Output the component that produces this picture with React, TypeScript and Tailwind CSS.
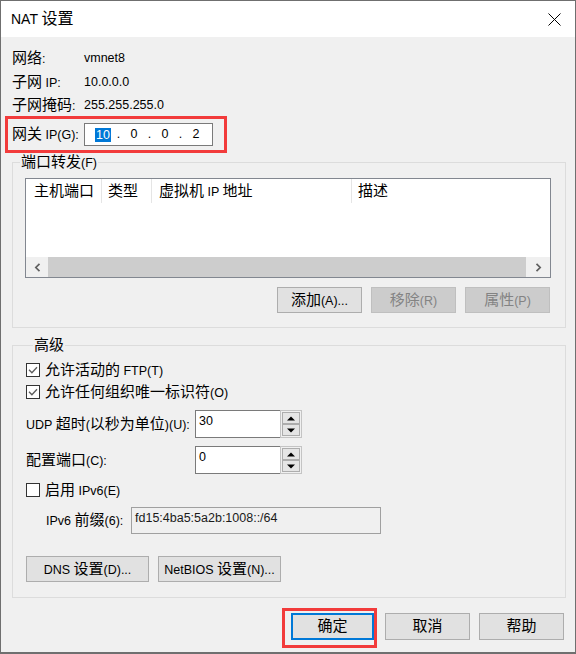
import React from 'react';

const CJK_RE = /([\u2E80-\u9FFF\uF900-\uFAFF\uFF00-\uFFEF]+)/;

// Latin runs stay small, CJK runs a bit larger, like the Windows dialog font mix
function Mix({ text, title = false }: { text: string; title?: boolean }) {
  const parts = text.split(CJK_RE);
  return (
    <span className="whitespace-pre">
      {parts.map((part, i) =>
        i % 2 === 1 ? (
          <span key={i} className={title ? 'text-[16px]' : 'text-[15px]'}>
            {part}
          </span>
        ) : (
          <React.Fragment key={i}>{part}</React.Fragment>
        )
      )}
    </span>
  );
}

function Btn({ label, className = '', disabled = false }: { label: string; className?: string; disabled?: boolean }) {
  return (
    <button
      type="button"
      className={`flex items-center justify-center border ${
        disabled ? 'bg-[#cccccc] border-[#bfbfbf] text-[#838383]' : 'bg-[#e1e1e1] border-[#adadad] text-black'
      } ${className}`}
    >
      <Mix text={label} />
    </button>
  );
}

function Check({ checked }: { checked: boolean }) {
  return (
    <span className="w-[14px] h-[14px] border border-[#333333] bg-white flex items-center justify-center">
      {checked && (
        <svg width="10" height="8" viewBox="0 0 10 8">
          <path d="M1 3.8 L3.9 6.7 L9 1.2" stroke="#5c5c5c" strokeWidth="1.3" fill="none" />
        </svg>
      )}
    </span>
  );
}

function SpinBox({ value }: { value: string }) {
  return (
    <div className="flex w-[107px] h-[28px]">
      <div className="flex-1 bg-white border-y border-l border-[#7a7a7a] pl-[3px] pt-[2px] leading-[16px]">{value}</div>
      <div className="w-[22px] border border-[#c4c4c4] bg-[#f0f0f0] p-[1px] flex flex-col">
        <div className="flex-1 border border-[#adadad] bg-[#e5e5e5] flex items-center justify-center">
          <svg width="8" height="5" viewBox="0 0 8 5">
            <path d="M0 4.5 L4 0.5 L8 4.5 Z" fill="#000" />
          </svg>
        </div>
        <div className="flex-1 border border-[#adadad] bg-[#e5e5e5] flex items-center justify-center">
          <svg width="8" height="5" viewBox="0 0 8 5">
            <path d="M0 0.5 L8 0.5 L4 4.5 Z" fill="#000" />
          </svg>
        </div>
      </div>
    </div>
  );
}

function GroupBox({ title, className = '', children }: { title: string; className?: string; children: React.ReactNode }) {
  return (
    <fieldset className={`ml-[7px] w-[554px] border border-[#dcdcdc] ${className}`}>
      <legend className="ml-[7px] px-[1px] h-[17px] leading-[17px] flex items-center">
        <Mix text={title} />
      </legend>
      {children}
    </fieldset>
  );
}

export default function App() {
  return (
    <div className="w-[576px] h-[654px] border border-b-2 border-[#6f6f6f] bg-[#f0f0f0] flex flex-col overflow-hidden font-['Liberation_Sans','Noto_Sans_CJK_SC',sans-serif] text-[12.5px] leading-[17px] text-black">
      {/* title bar */}
      <div className="h-[36px] shrink-0 bg-white flex items-center justify-between pl-[10px] pr-[14px]">
        <span className="text-[14px]">
          <Mix text="NAT 设置" title />
        </span>
        <svg width="13" height="13" viewBox="0 0 13 13">
          <path d="M0.5 0.5 L12.5 12.5 M12.5 0.5 L0.5 12.5" stroke="#000" strokeWidth="1" />
        </svg>
      </div>

      <div className="flex flex-col pl-[4px]">
        <div className="mt-[9px] ml-[7px] flex flex-col">
          <div className="h-[24px] flex items-center">
            <span className="w-[72px]"><Mix text="网络:" /></span>
            <span>vmnet8</span>
          </div>
          <div className="h-[24px] flex items-center">
            <span className="w-[72px]"><Mix text="子网 IP:" /></span>
            <span>10.0.0.0</span>
          </div>
          <div className="h-[22px] flex items-center">
            <span className="w-[72px]"><Mix text="子网掩码:" /></span>
            <span>255.255.255.0</span>
          </div>
        </div>

        <div className="w-[222px] h-[37px] border-[3px] border-[#f23b3b] flex items-center pl-[4px]">
          <span className="w-[72px]"><Mix text="网关 IP(G):" /></span>
          <div className="w-[129px] h-[23px] bg-white border border-[#7a7a7a] flex items-center pl-[9px]">
            <span className="w-[18px] flex justify-center">
              <span className="bg-[#0078d7] text-white px-[1px] leading-[14px]">10</span>
            </span>
            <span className="w-[13px] text-center">.</span>
            <span className="w-[18px] text-center">0</span>
            <span className="w-[13px] text-center">.</span>
            <span className="w-[18px] text-center">0</span>
            <span className="w-[13px] text-center">.</span>
            <span className="w-[18px] text-center">2</span>
          </div>
        </div>

        <GroupBox title="端口转发(F)" className="mt-[1px] pb-[14px]">
          <div className="mt-[7px] ml-[12px] w-[526px] h-[100px] border border-[#828790] bg-white flex flex-col">
            <div className="h-[24px] flex">
              <div className="w-[76px] pl-[8px] border-r border-[#e5e5e5] flex items-center"><Mix text="主机端口" /></div>
              <div className="w-[50px] pl-[6px] border-r border-[#e5e5e5] flex items-center"><Mix text="类型" /></div>
              <div className="w-[200px] pl-[7px] border-r border-[#e5e5e5] flex items-center"><Mix text="虚拟机 IP 地址" /></div>
              <div className="flex-1 pl-[6px] flex items-center"><Mix text="描述" /></div>
            </div>
            <div className="flex-1" />
            <div className="h-[20px] flex">
              <div className="w-[22px] bg-[#f0f0f0] flex items-center justify-center">
                <svg width="7" height="9" viewBox="0 0 7 9">
                  <path d="M5.5 0.8 L1.8 4.5 L5.5 8.2" stroke="#606060" strokeWidth="1.7" fill="none" />
                </svg>
              </div>
              <div className="flex-1 bg-[#cdcdcd]" />
              <div className="w-[24px] bg-[#f0f0f0] flex items-center justify-center">
                <svg width="7" height="9" viewBox="0 0 7 9">
                  <path d="M1.5 0.8 L5.2 4.5 L1.5 8.2" stroke="#606060" strokeWidth="1.7" fill="none" />
                </svg>
              </div>
            </div>
          </div>
          <div className="mt-[9px] ml-[12px] w-[526px] pr-[1px] flex justify-end gap-[9px]">
            <Btn label="添加(A)..." className="w-[85px] h-[26px]" />
            <Btn label="移除(R)" className="w-[85px] h-[26px]" disabled />
            <Btn label="属性(P)" className="w-[85px] h-[26px]" disabled />
          </div>
        </GroupBox>

        <GroupBox title="高级" className="mt-[9px] pb-[15px] pl-[13px]">
          <div className="mt-[5px] h-[22px] flex items-center gap-[5px]">
            <Check checked />
            <Mix text="允许活动的 FTP(T)" />
          </div>
          <div className="h-[22px] flex items-center gap-[5px]">
            <Check checked />
            <Mix text="允许任何组织唯一标识符(O)" />
          </div>
          <div className="mt-[7px] h-[28px] flex items-center">
            <span className="w-[169px]"><Mix text="UDP 超时(以秒为单位)(U):" /></span>
            <SpinBox value="30" />
          </div>
          <div className="mt-[8px] h-[28px] flex items-center">
            <span className="w-[169px]"><Mix text="配置端口(C):" /></span>
            <SpinBox value="0" />
          </div>
          <div className="mt-[5px] h-[22px] flex items-center gap-[5px]">
            <Check checked={false} />
            <Mix text="启用 IPv6(E)" />
          </div>
          <div className="mt-[6px] h-[27px] pl-[20px] flex items-center">
            <span className="w-[85px]"><Mix text="IPv6 前缀(6):" /></span>
            <div className="w-[250px] h-[27px] border border-[#a0a0a0] bg-[#f0f0f0] pl-[3px] pt-[2px] leading-[16px] text-[#1a1a1a]">
              fd15:4ba5:5a2b:1008::/64
            </div>
          </div>
          <div className="mt-[22px] flex gap-[9px]">
            <Btn label="DNS 设置(D)..." className="w-[123px] h-[26px]" />
            <Btn label="NetBIOS 设置(N)..." className="w-[123px] h-[26px]" />
          </div>
        </GroupBox>

        <div className="mt-[10px] pr-[11px] flex justify-end items-start">
          <div className="w-[95px] h-[40px] border-[3px] border-[#f23b3b] pl-[6px] pt-[2px]">
            <button
              type="button"
              className="w-[83px] h-[27px] border-2 border-[#0078d7] bg-[#e1e1e1] flex items-center justify-center"
            >
              <Mix text="确定" />
            </button>
          </div>
          <Btn label="取消" className="ml-[8px] mt-[5px] w-[85px] h-[27px]" />
          <Btn label="帮助" className="ml-[9px] mt-[5px] w-[85px] h-[27px]" />
        </div>
      </div>
    </div>
  );
}
